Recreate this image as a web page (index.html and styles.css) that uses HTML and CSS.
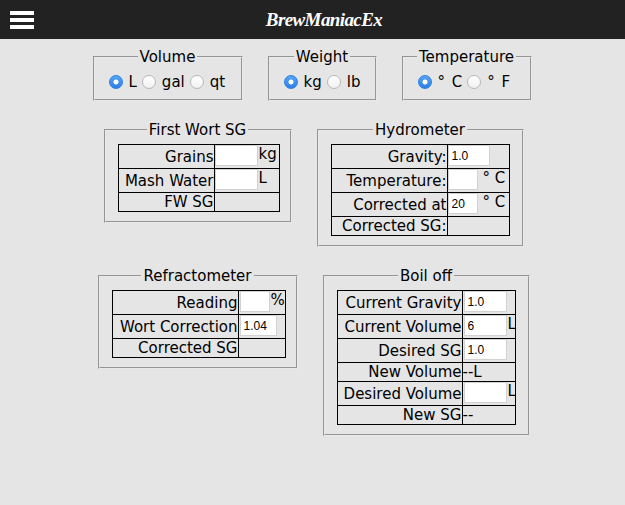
FILE: index.html
```html
<!DOCTYPE html>
<html>
<head>
<meta charset="utf-8">
<title>BrewManiacEx</title>
<link rel="stylesheet" href="styles.css">
</head>
<body>
<header class="topbar">
  <div class="menu"><span></span><span></span><span></span></div>
  <div class="title">BrewManiacEx</div>
</header>
<main class="page">
  <div class="row">
    <fieldset class="fs units w-vol">
      <legend>Volume</legend>
      <div class="opts">
        <label class="opt"><input type="radio" name="vol" checked>L</label>
        <label class="opt"><input type="radio" name="vol">gal</label>
        <label class="opt"><input type="radio" name="vol">qt</label>
      </div>
    </fieldset>
    <fieldset class="fs units w-wt">
      <legend>Weight</legend>
      <div class="opts">
        <label class="opt"><input type="radio" name="wt" checked>kg</label>
        <label class="opt"><input type="radio" name="wt">lb</label>
      </div>
    </fieldset>
    <fieldset class="fs units w-temp">
      <legend>Temperature</legend>
      <div class="opts">
        <label class="opt deg-opt"><input type="radio" name="temp" checked>&deg; C</label>
        <label class="opt deg-opt"><input type="radio" name="temp">&deg; F</label>
      </div>
    </fieldset>
  </div>

  <div class="row">
    <fieldset class="fs w-fw">
      <legend>First Wort SG</legend>
      <table class="grid t-fw">
        <tr><td class="l">Grains</td><td class="v"><div class="val"><input class="num w43" type="text"><span class="unit">kg</span></div></td></tr>
        <tr><td class="l">Mash Water</td><td class="v"><div class="val"><input class="num w43" type="text"><span class="unit">L</span></div></td></tr>
        <tr><td class="l">FW SG</td><td class="v"></td></tr>
      </table>
    </fieldset>
    <fieldset class="fs w-hy">
      <legend>Hydrometer</legend>
      <table class="grid t-hy">
        <tr><td class="l">Gravity:</td><td class="v"><div class="val"><input class="num w42" type="text" value="1.0"></div></td></tr>
        <tr><td class="l">Temperature:</td><td class="v"><div class="val"><input class="num w30" type="text"><span class="unit deg">&deg; C</span></div></td></tr>
        <tr><td class="l">Corrected at</td><td class="v"><div class="val"><input class="num w30" type="text" value="20"><span class="unit deg">&deg; C</span></div></td></tr>
        <tr><td class="l">Corrected SG:</td><td class="v"></td></tr>
      </table>
    </fieldset>
  </div>

  <div class="row">
    <fieldset class="fs w-rf">
      <legend>Refractometer</legend>
      <table class="grid t-rf">
        <tr><td class="l">Reading</td><td class="v"><div class="val"><input class="num w30 ml" type="text"><span class="unit">%</span></div></td></tr>
        <tr><td class="l">Wort Correction</td><td class="v"><div class="val"><input class="num w37 ml" type="text" value="1.04"></div></td></tr>
        <tr><td class="l">Corrected SG</td><td class="v"></td></tr>
      </table>
    </fieldset>
    <fieldset class="fs w-bo">
      <legend>Boil off</legend>
      <table class="grid t-bo">
        <tr><td class="l">Current Gravity</td><td class="v"><div class="val"><input class="num w43 ml" type="text" value="1.0"></div></td></tr>
        <tr><td class="l">Current Volume</td><td class="v"><div class="val"><input class="num w43 ml" type="text" value="6"><span class="unit">L</span></div></td></tr>
        <tr><td class="l">Desired SG</td><td class="v"><div class="val"><input class="num w43 ml" type="text" value="1.0"></div></td></tr>
        <tr><td class="l">New Volume</td><td class="v">--L</td></tr>
        <tr><td class="l">Desired Volume</td><td class="v"><div class="val"><input class="num w43 ml" type="text"><span class="unit">L</span></div></td></tr>
        <tr><td class="l">New SG</td><td class="v">--</td></tr>
      </table>
    </fieldset>
  </div>
</main>
</body>
</html>
```

FILE: styles.css
```css
* { box-sizing: border-box; }

body {
  margin: 0;
  background: #e5e5e5;
  font-family: "DejaVu Sans", sans-serif;
  font-size: 15px;
  color: #000;
}

.topbar {
  height: 39px;
  background: #222222;
  display: flex;
  align-items: center;
  padding-left: 10px;
}

.menu {
  width: 24px;
  display: flex;
  flex-direction: column;
  gap: 3px;
}

.menu span {
  display: block;
  height: 4px;
  background: #ffffff;
}

.title {
  flex: 1;
  text-align: center;
  padding-right: 11px;
  color: #ffffff;
  font-family: "Liberation Serif", serif;
  font-style: italic;
  font-weight: bold;
  font-size: 19px;
  letter-spacing: -0.6px;
}

.page {
  padding-top: 9px;
}

.row {
  display: flex;
  justify-content: center;
  align-items: flex-start;
  gap: 25px;
  padding-right: 1px;
}

.row + .row {
  margin-top: 20px;
  padding-right: 0;
  padding-left: 2px;
}

.fs {
  margin: 0;
  min-width: 0;
  border: 2px groove #e9e9e9;
  padding: 5px 12px 9px;
}

.fs legend {
  margin: 0 auto;
  padding: 0 2px;
}

.fs.units {
  padding: 6px 12px 7px;
}

.w-vol { width: 150px; }
.w-wt { width: 109px; }
.w-temp { width: 130px; }
.w-fw { width: 188px; }
.w-hy { width: 207px; }
.w-rf { width: 200px; }
.w-bo { width: 207px; }

.opts {
  display: flex;
  align-items: center;
  height: 20px;
  margin-left: 2px;
}

.opt {
  display: flex;
  align-items: center;
  margin-right: 5px;
  white-space: nowrap;
}

.deg-opt {
  word-spacing: 2px;
}

.opt input {
  -webkit-appearance: none;
  appearance: none;
  width: 14px;
  height: 14px;
  margin: 0 6px 0 0;
  border-radius: 50%;
  border: 1px solid #b8b8b8;
  background: linear-gradient(#ffffff, #f1f1f1);
}

.opt input:checked {
  border: 1px solid #2c7fe3;
  background:
    radial-gradient(circle, #ffffff 0 2.2px, rgba(255,255,255,0) 2.8px),
    linear-gradient(#58a5f6, #2b7fe6);
}

.grid {
  border-collapse: separate;
  border-spacing: 0;
  table-layout: fixed;
  border-top: 1px solid #000;
  border-left: 1px solid #000;
}

.grid td {
  padding: 0;
  border-right: 1px solid #000;
  border-bottom: 1px solid #000;
  line-height: 18px;
  white-space: nowrap;
  overflow: visible;
}

.grid td.l { text-align: right; }
.grid td.v { text-align: left; }

.t-fw { width: 162px; }
.t-fw td.l { width: 96px; }
.t-hy { width: 179px; }
.t-hy td.l { width: 116px; }
.t-rf { width: 174px; }
.t-rf td.l { width: 126px; }
.t-bo { width: 179px; }
.t-bo td.l { width: 125px; }

.val {
  display: flex;
  align-items: flex-start;
  height: 23px;
}

.num {
  height: 21px;
  margin: 0;
  padding: 0 3px;
  border: 1px solid #d2d2d2;
  background: #ffffff;
  font-family: "Liberation Sans", sans-serif;
  font-size: 12px;
  color: #000;
  outline: none;
}

.num.ml { margin-left: 1px; }
.w30 { width: 30px; }
.w37 { width: 37px; }
.w42 { width: 42px; }
.w43 { width: 43px; }

.unit {
  line-height: 18px;
  padding-left: 1px;
}

.unit.deg {
  padding-left: 5px;
}
```
